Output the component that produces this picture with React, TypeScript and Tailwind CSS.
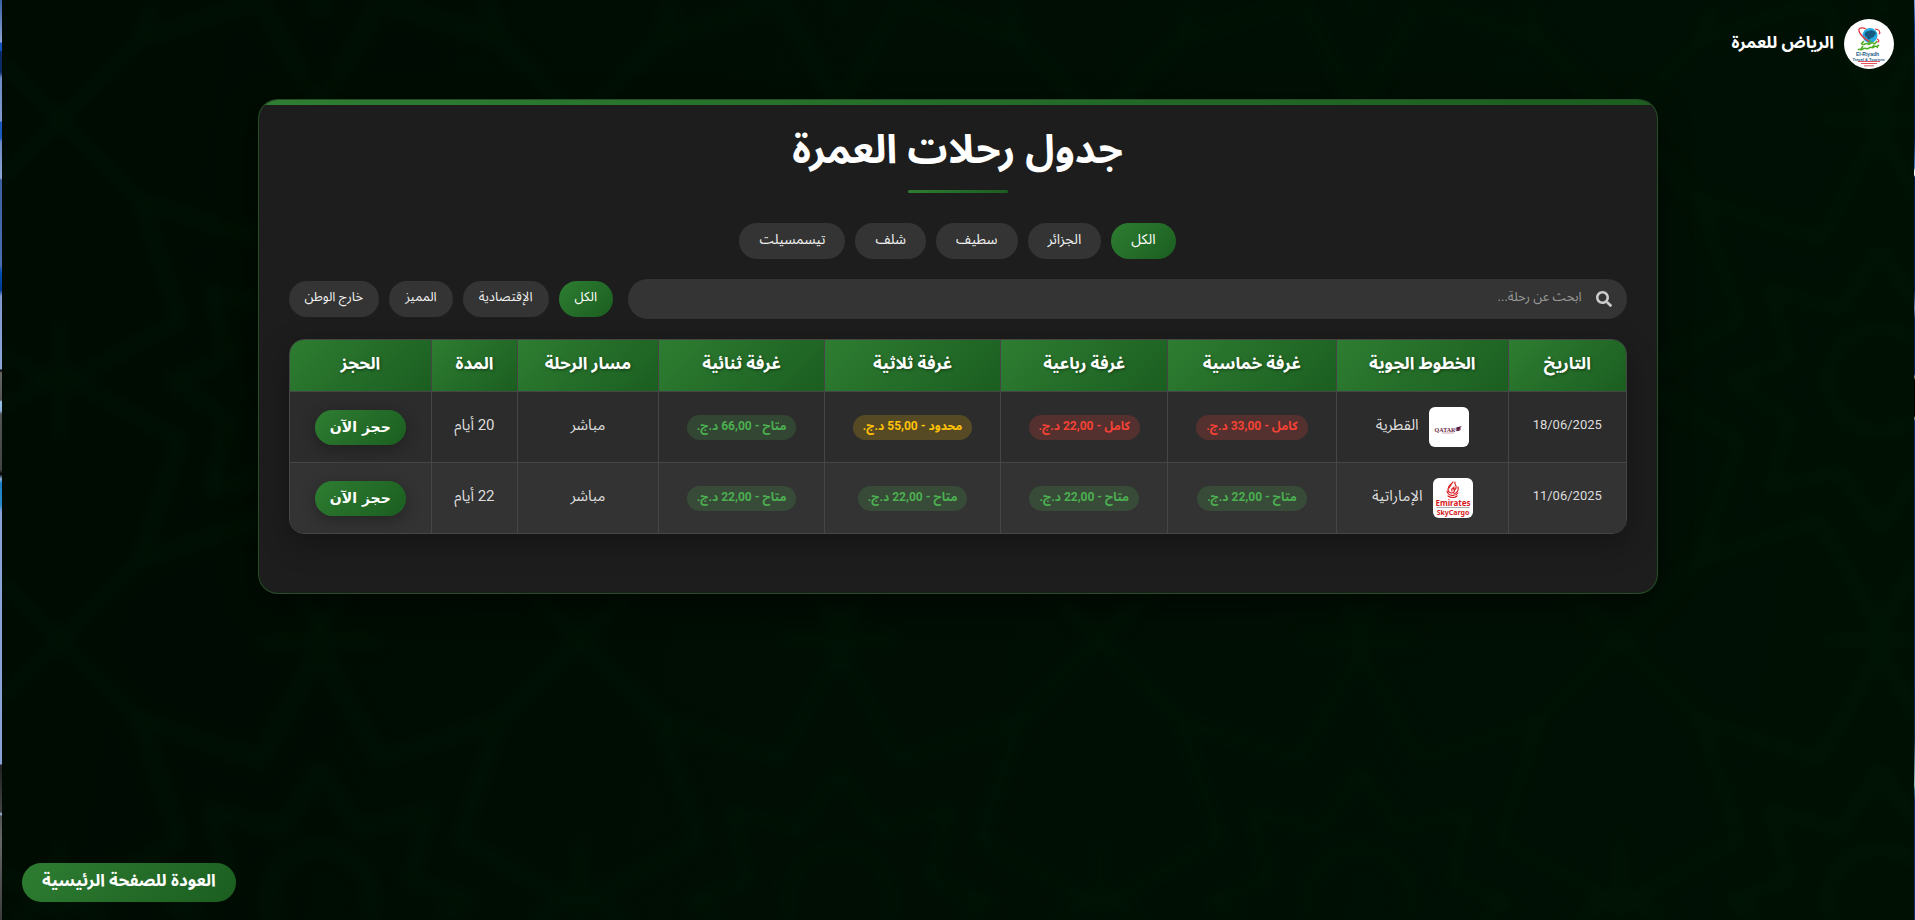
import { FaSearch } from "react-icons/fa";

type Status = "available" | "limited" | "full";
type Room = { status: Status; price: string };
type Trip = {
  date: string;
  airline: string;
  logo: "qatar" | "emirates";
  rooms: Room[];
  route: string;
  duration: string;
};

const cities = ["الكل", "الجزائر", "سطيف", "شلف", "تيسمسيلت"];
const classes = ["الكل", "الإقتصادية", "المميز", "خارج الوطن"];

const columns = [
  { label: "التاريخ", width: "w-[8.8%]" },
  { label: "الخطوط الجوية", width: "w-[12.9%]" },
  { label: "غرفة خماسية", width: "w-[12.6%]" },
  { label: "غرفة رباعية", width: "w-[12.5%]" },
  { label: "غرفة ثلاثية", width: "w-[13.2%]" },
  { label: "غرفة ثنائية", width: "w-[12.4%]" },
  { label: "مسار الرحلة", width: "w-[10.6%]" },
  { label: "المدة", width: "w-[6.4%]" },
  { label: "الحجز", width: "w-[10.6%]" },
];

const trips: Trip[] = [
  {
    date: "18/06/2025",
    airline: "القطرية",
    logo: "qatar",
    rooms: [
      { status: "full", price: "33,00" },
      { status: "full", price: "22,00" },
      { status: "limited", price: "55,00" },
      { status: "available", price: "66,00" },
    ],
    route: "مباشر",
    duration: "20 أيام",
  },
  {
    date: "11/06/2025",
    airline: "الإماراتية",
    logo: "emirates",
    rooms: [
      { status: "available", price: "22,00" },
      { status: "available", price: "22,00" },
      { status: "available", price: "22,00" },
      { status: "available", price: "22,00" },
    ],
    route: "مباشر",
    duration: "22 أيام",
  },
];

const statusText: Record<Status, string> = { available: "متاح", limited: "محدود", full: "كامل" };
const statusStyle: Record<Status, string> = {
  available: "bg-[#4caf50]/20 text-[#4caf50]",
  limited: "bg-[#ffc107]/20 text-[#ffc107]",
  full: "bg-[#f44336]/20 text-[#f44336]",
};

function BrandLogo() {
  return (
    <svg viewBox="0 0 50 50" direction="ltr" className="size-[50px] shrink-0" role="img" aria-label="الرياض">
      <circle cx="25" cy="25" r="25" fill="#fff" />
      <circle cx="26" cy="16.500" r="7.500" fill="#29a9e0" />
      <path d="M21 14c2-3 5-1 6-3 2 1 5 1 5 4-2 1-2 4-5 4-1 2-4 2-4-1-2 0-3-2-2-4z" fill="#155a80" />
      <path d="M22 10c-4-2-8-1-7 2 1 4 6 8 11 11" fill="none" stroke="#e2373f" strokeWidth="1.3" />
      <path d="M31 10c4 0 6 3 4 5M33 20c2 1 3 3 0 3" fill="none" stroke="#e2373f" strokeWidth="1.2" />
      <path d="M18 25c2 2 4-2 6 0s3-3 5-1 3-1 4-2M17 25l3-3M25 25l1-4M14 31c2-2 3 1 5-1s4 1 6-1 3 1 5-1 2 1 5-2M17 30l2-3M28 29l2-3M33 29l1-3" fill="none" stroke="#4fae22" strokeWidth="1.5" />
      <text x="23.500" y="36.500" textAnchor="middle" fontSize="5" fontWeight="700" fill="#1b5c86" className="font-['Liberation_Sans',sans-serif]">El-Riyadh</text>
      <text x="24.500" y="41.800" textAnchor="middle" fontSize="4" fontWeight="700" fill="#1b5c86" className="font-['Liberation_Sans',sans-serif]">Travel &amp; Tourism</text>
      <path d="M14 42.500h22M17 44.500h16M20 46.800h10" stroke="#e05560" strokeWidth="1" />
    </svg>
  );
}

function QatarLogo() {
  return (
    <svg viewBox="0 0 40 40" direction="ltr" className="size-10 shrink-0 rounded-md bg-white" role="img" aria-label="Qatar Airways">
      <text x="16" y="24.500" textAnchor="middle" fontSize="6" fontWeight="700" fill="#6a1f44" className="font-['Liberation_Serif',serif]">QATAR</text>
      <path d="M13 26h12" stroke="#c9a9b8" strokeWidth="1" />
      <path d="M27 24c-1-2 0-4 2-4l4-1-2 2 1 1-2 2z" fill="#5b1a3c" />
      <path d="M27 20.500l1 4M30 22l1 2" stroke="#9b8f98" strokeWidth="0.800" />
    </svg>
  );
}

function EmiratesLogo() {
  return (
    <svg viewBox="0 0 40 40" direction="ltr" className="size-10 shrink-0 rounded-md bg-white" role="img" aria-label="Emirates SkyCargo">
      <g fill="none" stroke="#d71a21" strokeWidth="1.200" strokeLinecap="round">
        <path d="M20 4c-1 2-5 3-5 7 0 3 2 4 4 4s3-2 2-4-3 0-2 2" />
        <path d="M22 4c-1 3 2 3 1 6s-3 1-2-1M25 9c1 3-1 6-4 7" />
        <path d="M14 13c1 5 8 6 11 2M15 18c3 2 7 2 9 0M18 7l-2 3" />
      </g>
      <text x="20" y="27.500" textAnchor="middle" fontSize="8" fontWeight="700" fill="#d71a21" className="font-['Noto_Sans',sans-serif]">Emirates</text>
      <path d="M3.500 29.500h33" stroke="#8a8a8a" strokeWidth="0.700" />
      <text x="20" y="36.500" textAnchor="middle" fontSize="7" fontWeight="700" fill="#d71a21" className="font-['Noto_Sans',sans-serif]">SkyCargo</text>
    </svg>
  );
}

function Backdrop() {
  return (
    <div aria-hidden="true" className="absolute inset-0 -z-10 overflow-hidden bg-[linear-gradient(100deg,#000b02,#000e04_45%,#001104)]">
      <svg className="size-full" xmlns="http://www.w3.org/2000/svg">
        <defs>
          <pattern id="lattice" width="520" height="520" x="60" y="120" patternUnits="userSpaceOnUse">
            <g fill="none" stroke="#001a07" strokeWidth="12" strokeLinejoin="round">
              <path d="M260 10l60 110 120-40-40 120 110 60-110 60 40 120-120-40-60 110-60-110-120 40 40-120-110-60 110-60-40-120 120 40z" />
              <path d="M260 130l40 60 70-20-20 70 60 20-60 40 20 70-70-20-40 60-40-60-70 20 20-70-60-40 60-20-20-70 70 20z" />
              <path d="M0 0l90 90M520 0l-90 90M0 520l90-90M520 520l-90-90M0 200v120M520 200v120M200 0h120M200 520h120" />
              <circle cx="260" cy="260" r="52" />
            </g>
          </pattern>
          <filter id="soft" colorInterpolationFilters="sRGB">
            <feGaussianBlur stdDeviation="7" />
          </filter>
        </defs>
        <rect width="100%" height="100%" fill="url(#lattice)" filter="url(#soft)" opacity="0.45" />
      </svg>
      <div className="absolute inset-y-0 left-0 w-0.5 bg-[linear-gradient(180deg,#3a62a5_0,#8ca3d3_42px,#1456c0_43px,#1456c0_50px,#0b2a66_52px,#0b2a66_72px,#6f8bc6_78px,#8098ce_121px,#1a5bc0_122px,#1a5bc0_138px,#6f8bc6_142px,#8ca3d3_178px,#3b5f9f_180px,#4a6eb0_265px,#0050b4_272px,#003c90_290px,#7f98cf_296px,#8ea5da_369px,#000_370px,#666_373px,#555_400px,#9cc6ee_402px,#8ab0d8_411px,#555_414px,#444_470px,#000_474px,#8ab0d8_479px,#1d7fc4_483px,#2a8ac8_505px,#8ba2d8_512px,#8ba2d8_764px,#222_765px,#444_812px,#9cc6ee_814px,#555_816px,#666_840px,#3c3c3c_920px)]" />
      <div className="absolute inset-y-0 right-0 w-px bg-[linear-gradient(180deg,#7a9bd8_0,#0b3f9c_25px,#0a1a40_65px,#0a1a40_140px,#3b82d6_168px,#fff_171px,#fff_175px,#0b1c50_177px,#0b1c50_290px,#6d7fb5_308px,#10204a_320px,#10204a_374px,#999_377px,#000_380px,#000_416px,#999_418px,#142a66_421px,#142848_740px,#8fc3c8_785px,#2f7a90_790px,#1a2c66_802px,#1a2c66_920px)]" />
    </div>
  );
}

function Pills({ name, items, look }: { name: string; items: string[]; look: string }) {
  return (
    <div role="group" aria-label={name} className="flex flex-wrap justify-center gap-2.5">
      {items.map((item, i) => (
        <button
          key={item}
          type="button"
          aria-pressed={i === 0}
          className={`h-9 rounded-full pb-1 ${look} ${
            i === 0 ? "bg-linear-135 from-[#2e7d32] to-[#1b5e20] text-white" : "bg-white/10 text-[#f0f0f0]"
          }`}
        >
          {item}
        </button>
      ))}
    </div>
  );
}

export default function App() {
  return (
    <div
      dir="rtl"
      lang="ar"
      className="relative isolate flex min-h-screen flex-col font-['Roboto','Noto_Sans_Arabic','DejaVu_Sans',sans-serif] text-white"
    >
      <Backdrop />

      <header className="flex items-center gap-2.5 px-[21px] pt-[19px]">
        <BrandLogo />
        <span className="pb-0.5 text-[17px] font-bold">الرياض للعمرة</span>
      </header>

      <main className="flex-1 px-5 pt-[30px]">
        <section className="mx-auto max-w-[1400px] overflow-hidden rounded-[20px] border border-[#2e7d32]/50 bg-[#1c1d1c] shadow-[0_10px_30px_rgba(0,0,0,0.5)]">
          <div className="h-[5px] bg-linear-to-r from-[#2e7d32] to-[#1b5e20]" />
          <div className="px-[30px] pb-[59px]">
            <h1 className="pt-5 text-center text-[40px] leading-[50px] font-bold">جدول رحلات العمرة</h1>
            <div className="mx-auto mt-[15px] h-[3px] w-[100px] rounded-full bg-linear-to-r from-[#2e7d32] to-[#1b5e20]" />

            <div className="mt-[30px]">
              <Pills name="المدينة" items={cities} look="px-5 text-sm" />
            </div>

            <div className="mt-5 flex items-center gap-[15px]">
              <label className="flex h-10 flex-1 items-center gap-3.5 rounded-full bg-white/10 px-[15px]">
                <FaSearch className="size-4 text-[#cccccc]" aria-hidden="true" />
                <input
                  type="text"
                  aria-label="ابحث عن رحلة"
                  placeholder="ابحث عن رحلة..."
                  className="min-w-0 flex-1 bg-transparent pb-1 text-[13px] outline-none placeholder:text-[#9a9a9a]"
                />
              </label>
              <Pills name="الفئة" items={classes} look="px-4 text-[13px]" />
            </div>

            <div className="mt-5 overflow-hidden rounded-[15px] border border-[#464646] shadow-[0_10px_30px_rgba(0,0,0,0.3)]">
              <table className="w-full table-fixed border-separate border-spacing-0 text-center">
                <thead>
                  <tr>
                    {columns.map((c) => (
                      <th
                        key={c.label}
                        scope="col"
                        className={`h-[52px] border-b border-l border-[#464646] bg-linear-135 from-[#2e7d32] to-[#1b5e20] pb-1 text-[17px] font-bold [text-shadow:1px_1px_3px_rgba(0,0,0,0.4)] last:border-l-0 ${c.width}`}
                      >
                        {c.label}
                      </th>
                    ))}
                  </tr>
                </thead>
                <tbody className="text-[15px] text-[#dddddd] [&_td]:h-[71px] [&_td]:border-b [&_td]:border-l [&_td]:border-[#464646] [&_td:last-child]:border-l-0 [&_tr:last-child_td]:h-[70px] [&_tr:last-child_td]:border-b-0">
                  {trips.map((t) => (
                    <tr key={t.date} className="bg-[#2c2c2c] even:bg-[#333333]">
                      <td className="pb-1 text-[13px]">{t.date}</td>
                      <td>
                        <div className="flex items-center justify-center gap-2.5">
                          {t.logo === "qatar" ? <QatarLogo /> : <EmiratesLogo />}
                          <span className="pb-1">{t.airline}</span>
                        </div>
                      </td>
                      {t.rooms.map((r, i) => (
                        <td key={i}>
                          <span className={`inline-block h-[25px] rounded-full px-2.5 text-xs leading-[22px] font-bold ${statusStyle[r.status]}`}>
                            {statusText[r.status]} - {r.price} د.ج.
                          </span>
                        </td>
                      ))}
                      <td className="pb-1">{t.route}</td>
                      <td className="pb-1">{t.duration}</td>
                      <td>
                        <button
                          type="button"
                          className="h-[35px] rounded-full bg-linear-135 from-[#2e7d32] to-[#1b5e20] px-[15px] font-['DejaVu_Sans',sans-serif] text-sm font-bold text-white shadow-[0_4px_15px_rgba(0,0,0,0.3)]"
                        >
                          حجز الآن
                        </button>
                      </td>
                    </tr>
                  ))}
                </tbody>
              </table>
            </div>
          </div>
        </section>
      </main>

      <footer className="flex justify-end px-[22px] pb-[18px]">
        <a href="#home" className="flex h-[39px] items-center rounded-full bg-linear-135 from-[#2e7d32] to-[#1b5e20] px-5 pb-1 text-[17px] font-bold">
          العودة للصفحة الرئيسية
        </a>
      </footer>
    </div>
  );
}
